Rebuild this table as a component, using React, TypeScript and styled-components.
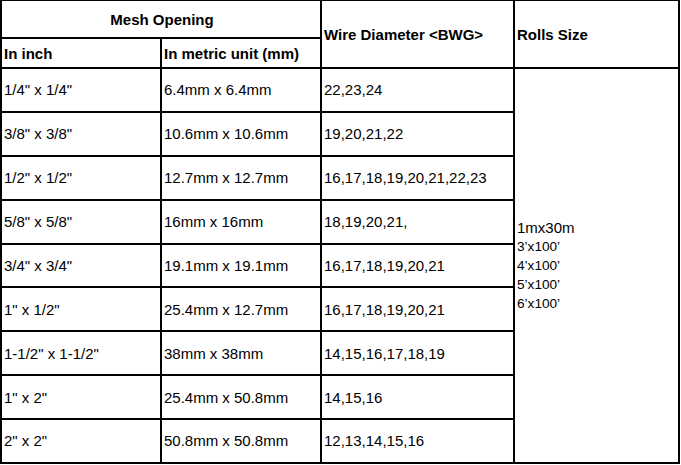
import React from "react";
import styled, { createGlobalStyle } from "styled-components";

const Global = createGlobalStyle`
  html, body { margin: 0; padding: 0; background: #fff; }
  body { font-family: "Liberation Sans", Arial, sans-serif; color: #000; }
`;

const Table = styled.table`
  border-collapse: separate;
  border-spacing: 0;
  table-layout: fixed;
  width: 680px;
  border-left: 2px solid #000;
  border-top: 1px solid #000;
  font-family: "Liberation Sans", Arial, sans-serif;
  font-size: 15px;
  color: #000;
`;

const Cell = styled.td<{ $bold?: boolean; $center?: boolean }>`
  box-sizing: border-box;
  border-right: 2px solid #000;
  border-bottom: 2px solid #000;
  padding: 0 0 0 2px;
  vertical-align: middle;
  font-weight: ${(p) => (p.$bold ? 700 : 400)};
  text-align: ${(p) => (p.$center ? "center" : "left")};
  white-space: nowrap;
  line-height: 17px;
`;

const TopRow = styled.tr`
  height: 38px;
`;
const SubRow = styled.tr`
  height: 30px;
`;
const DataRow = styled.tr`
  height: 43.89px;
`;

const RollsList = styled.div`
  display: flex;
  flex-direction: column;
`;

const RollLine = styled.div<{ $main?: boolean }>`
  font-size: ${(p) => (p.$main ? "15px" : "13.6px")};
  line-height: 19px;
`;

const rows: [string, string, string][] = [
  ["1/4\" x 1/4\"", "6.4mm x 6.4mm", "22,23,24"],
  ["3/8\" x 3/8\"", "10.6mm x 10.6mm", "19,20,21,22"],
  ["1/2\" x 1/2\"", "12.7mm x 12.7mm", "16,17,18,19,20,21,22,23"],
  ["5/8\" x 5/8\"", "16mm x 16mm", "18,19,20,21,"],
  ["3/4\" x 3/4\"", "19.1mm x 19.1mm", "16,17,18,19,20,21"],
  ["1\" x 1/2\"", "25.4mm x 12.7mm", "16,17,18,19,20,21"],
  ["1-1/2\" x 1-1/2\"", "38mm x 38mm", "14,15,16,17,18,19"],
  ["1\" x 2\"", "25.4mm x 50.8mm", "14,15,16"],
  ["2\" x 2\"", "50.8mm x 50.8mm", "12,13,14,15,16"],
];

export default function App() {
  return (
    <>
      <Global />
      <Table>
        <colgroup>
          <col style={{ width: 160 }} />
          <col style={{ width: 160 }} />
          <col style={{ width: 193 }} />
          <col style={{ width: 165 }} />
        </colgroup>
        <tbody>
          <TopRow>
            <Cell as="th" colSpan={2} $bold $center>
              Mesh Opening
            </Cell>
            <Cell as="th" rowSpan={2} $bold>
              Wire Diameter &lt;BWG&gt;
            </Cell>
            <Cell as="th" rowSpan={2} $bold>
              Rolls Size
            </Cell>
          </TopRow>
          <SubRow>
            <Cell as="th" $bold>
              In inch
            </Cell>
            <Cell as="th" $bold>
              In metric unit (mm)
            </Cell>
          </SubRow>
          {rows.map((r, i) => (
            <DataRow key={i}>
              <Cell>{r[0]}</Cell>
              <Cell>{r[1]}</Cell>
              <Cell>{r[2]}</Cell>
              {i === 0 && (
                <Cell rowSpan={9}>
                  <RollsList>
                    <RollLine $main>1mx30m</RollLine>
                    <RollLine>3’x100’</RollLine>
                    <RollLine>4’x100’</RollLine>
                    <RollLine>5’x100’</RollLine>
                    <RollLine>6’x100’</RollLine>
                  </RollsList>
                </Cell>
              )}
            </DataRow>
          ))}
        </tbody>
      </Table>
    </>
  );
}
